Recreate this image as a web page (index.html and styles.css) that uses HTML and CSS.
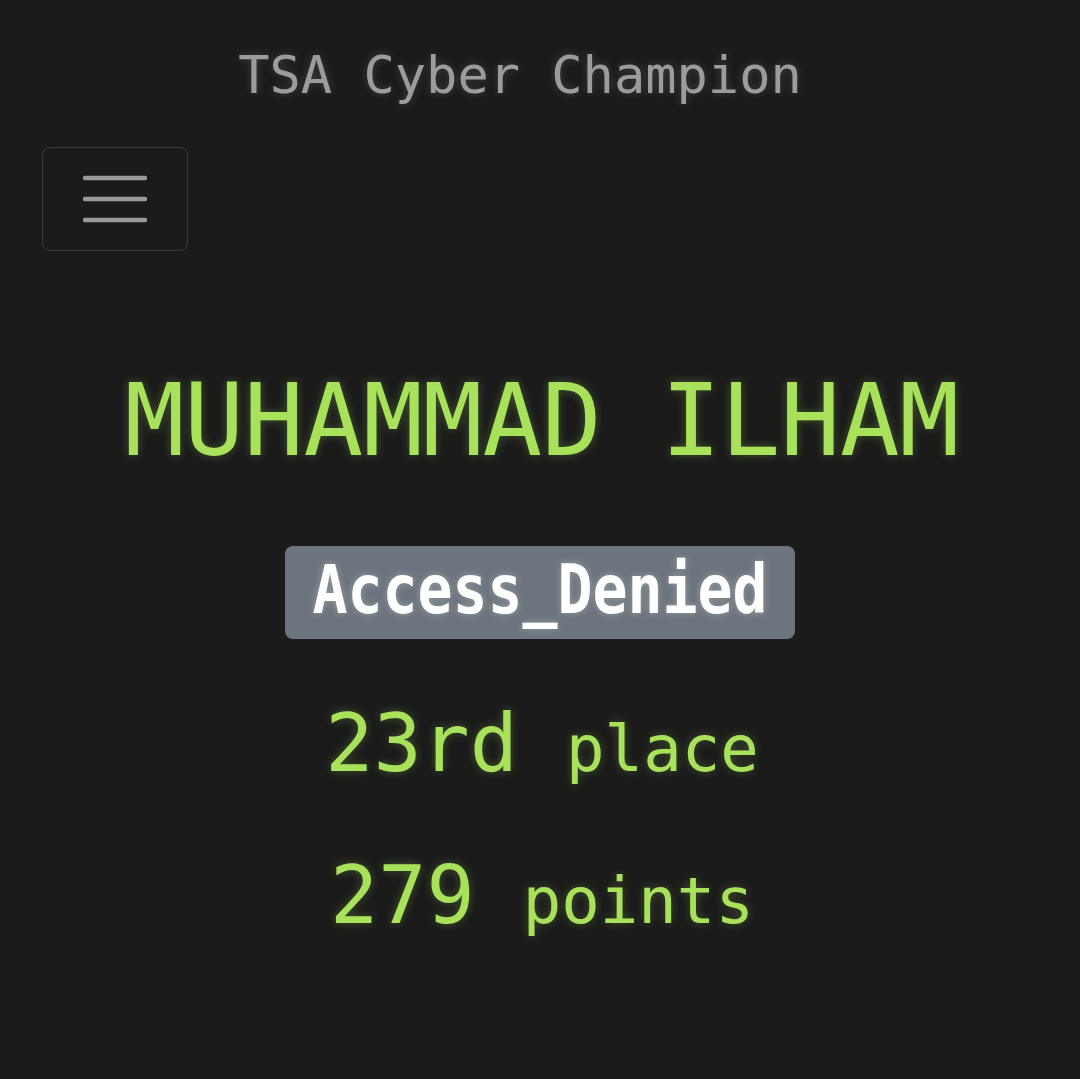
FILE: index.html
```html
<!DOCTYPE html>
<html lang="en">
<head>
<meta charset="utf-8">
<title>TSA Cyber Champion</title>
<link rel="stylesheet" href="styles.css">
</head>
<body>
  <header class="top">
    <div class="brand">TSA Cyber Champion</div>
    <button class="toggler" aria-label="Toggle navigation">
      <svg class="toggler-icon" width="64" height="48" viewBox="0 0 64 48">
        <path d="M2 3H62M2 24H62M2 45H62" stroke="#9a9a9a" stroke-width="4.5" stroke-linecap="round" fill="none"/>
      </svg>
    </button>
  </header>
  <main class="card">
    <h1 class="name">MUHAMMAD ILHAM</h1>
    <div class="badge"><span class="badge-text">Access_Denied</span></div>
    <p class="stat">23rd <small>place</small></p>
    <p class="stat">279 <small>points</small></p>
  </main>
</body>
</html>
```

FILE: styles.css
```css
html, body {
  margin: 0;
  padding: 0;
  background: #1b1b1b;
}
body {
  font-family: "DejaVu Sans Mono", "Liberation Mono", monospace;
  min-height: 1079px;
}
.top {
  padding: 45px 0 0 42px;
}
.brand {
  font-size: 52px;
  line-height: normal;
  color: #9c9c9c;
  text-align: center;
  padding-right: 82px;
  text-shadow: 0 0 8px rgba(160, 160, 160, 0.3);
}
.toggler {
  display: flex;
  align-items: center;
  justify-content: center;
  margin-top: 42px;
  width: 146px;
  height: 104px;
  box-sizing: border-box;
  background: transparent;
  border: 1.5px solid #3c3c3c;
  border-radius: 8px;
  padding: 0;
}
.toggler-icon {
  display: block;
}
.card {
  display: flex;
  flex-direction: column;
  align-items: center;
  padding-left: 4px;
}
.name {
  margin: 112px 0 0;
  font-size: 99px;
  font-weight: normal;
  line-height: normal;
  color: #a8e25a;
  text-shadow: 0 0 10px rgba(168, 226, 90, 0.3);
}
.badge {
  margin-top: 68px;
  margin-right: 4px;
  width: 510px;
  height: 93px;
  box-sizing: border-box;
  padding-bottom: 6px;
  display: flex;
  align-items: center;
  justify-content: center;
  background: #6c757d;
  border-radius: 8px;
}
.badge-text {
  display: inline-block;
  font-size: 68px;
  font-weight: bold;
  line-height: normal;
  color: #ffffff;
  transform: scaleX(0.855);
  white-space: nowrap;
  text-shadow: 0 0 8px rgba(255, 255, 255, 0.3);
}
.stat {
  margin: 58px 0 0;
  font-size: 80px;
  line-height: normal;
  color: #a8e25a;
  text-shadow: 0 0 10px rgba(168, 226, 90, 0.3);
}
.stat + .stat {
  margin-top: 59px;
}
.stat small {
  font-size: 64px;
}
```
